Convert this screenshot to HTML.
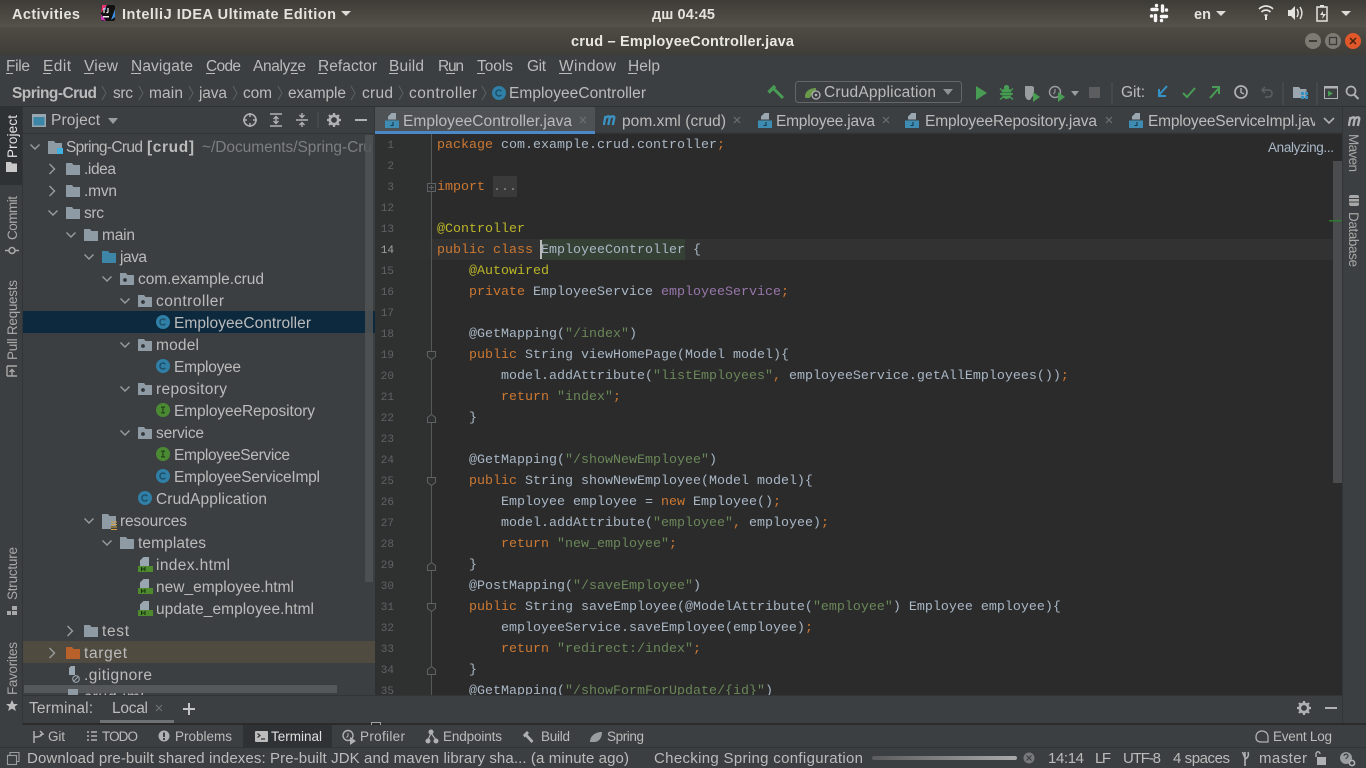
<!DOCTYPE html>
<html><head><meta charset="utf-8"><title>crud – EmployeeController.java</title>
<style>
html,body{margin:0;padding:0;background:#3c3f41;overflow:hidden;width:1366px;height:768px}
svg{display:block;font-family:"Liberation Sans",sans-serif}
.u{font-size:15.5px;fill:#bbbbbb}
.t{font-size:15px;fill:#bbbbbb}
.b{font-size:13.5px;fill:#bbbbbb}
.m{font-family:"Liberation Mono",monospace;font-size:13.333px;fill:#a9b7c6}
.n{font-family:"Liberation Mono",monospace;font-size:11px;fill:#606366;text-anchor:end}
.k{fill:#cc7832}.s{fill:#6a8759}.a{fill:#bbb529}.p{fill:#9876aa}
.c{stroke:#9a9d9f;stroke-width:1.4;fill:none}
.l{stroke:#afb1b3;stroke-width:1.5;fill:none}
</style></head><body>
<svg width="1366" height="768" viewBox="0 0 1366 768" xmlns="http://www.w3.org/2000/svg">
<defs>
<linearGradient id="g1" x1="0" y1="0" x2="0" y2="1"><stop offset="0" stop-color="#3e3c38"/><stop offset="1" stop-color="#55524a"/></linearGradient>
<linearGradient id="g2" x1="0" y1="0" x2="0" y2="1"><stop offset="0" stop-color="#4f4c45"/><stop offset="1" stop-color="#3f3d39"/></linearGradient>
<linearGradient id="g3" x1="0" y1="0" x2="1" y2="0"><stop offset="0" stop-color="#5a5c5e"/><stop offset="1" stop-color="#a8aaab"/></linearGradient>
<symbol id="d" width="14" height="12" viewBox="0 0 14 12"><path d="M0 0h6l1.500 2H14v10H0z" fill="#8e9ba5"/></symbol>
<symbol id="pk" width="14" height="12" viewBox="0 0 14 12"><path d="M0 0h6l1.500 2H14v10H0z" fill="#8e9ba5"/><circle cx="5" cy="7" r="1.900" fill="#34373a"/></symbol>
<symbol id="cl" width="14" height="14" viewBox="0 0 14 14"><circle cx="7" cy="7" r="7" fill="#2f7fa6"/><path d="M9.300 5.200A3 3 0 1 0 9.300 8.800" stroke="#1d4a62" stroke-width="1.300" fill="none"/></symbol>
<symbol id="in" width="14" height="14" viewBox="0 0 14 14"><circle cx="7" cy="7" r="7" fill="#4b8a33"/><path d="M5 4.200h4M5 9.800h4M7 4.200v5.600" stroke="#23481a" stroke-width="1.300" fill="none"/></symbol>
<symbol id="jf" width="14" height="15" viewBox="0 0 14 15"><path d="M3 3.500L6.500 0H11v6.500H3z" fill="#9aa7b0"/><rect y="7.500" width="14" height="7.500" fill="#3e8cb1"/><path d="M8 9v3.500H5.500" stroke="#16384a" stroke-width="1.100" fill="none"/></symbol>
<symbol id="hf" width="15" height="15" viewBox="0 0 15 15"><path d="M2 3.500L5.500 0H11v9H2z" fill="#9aa7b0"/><rect y="9" width="15" height="6" fill="#4e8a2e"/><path d="M3.500 10v4M7 10v4M3.500 12H7" stroke="#183010" stroke-width="1" fill="none"/></symbol>
<symbol id="cr" width="8" height="8" viewBox="0 0 8 8"><path d="M1 1l6 6M7 1L1 7" stroke="#6f7274" stroke-width="1.100" fill="none"/></symbol>
<symbol id="gr" width="14" height="14" viewBox="0 0 14 14"><circle cx="7" cy="7" r="4.200" fill="none" stroke="#afb1b3" stroke-width="2.600"/><path d="M7 0v2.500M7 11.500V14M0 7h2.500M11.500 7H14M2 2l1.800 1.800M10.200 10.200L12 12M12 2l-1.800 1.800M3.800 10.200L2 12" stroke="#afb1b3" stroke-width="2.200"/></symbol>
<symbol id="ml" width="15" height="11" viewBox="0 0 15 11"><path d="M2.500 1L.8 10M2.500 3c1.500-2 4.500-2.500 4.200 0L5.300 10M6.700 3c1.500-2 5-2.500 4.600 0L9.800 10" stroke="currentColor" stroke-width="2.300" fill="none"/></symbol>
</defs>

<rect width="1366" height="768" fill="#3c3f41"/>
<!-- gnome top bar -->
<rect width="1366" height="27" fill="url(#g1)"/>
<text x="12" y="19" font-size="14.500" font-weight="bold" fill="#e4e3de" textLength="68">Activities</text>
<rect x="101" y="5" width="14" height="16" rx="2" fill="#111"/><path d="M101 7l5-2v5zM115 9v8l-4 3z" fill="#3b8fe0"/><path d="M102 5h5l-6 8z" fill="#e8356b"/><path d="M101 14v6l5 1z" fill="#c93bb0"/><rect x="103" y="16" width="6" height="1.500" fill="#eee"/><path d="M104 8v5M108 8v4l-1.500 1" stroke="#eee" stroke-width="1.200" fill="none"/>
<text x="122" y="19" font-size="14.500" font-weight="bold" fill="#e4e3de" textLength="214">IntelliJ IDEA Ultimate Edition</text>
<path d="M341 11h10l-5 5z" fill="#dcdbd6"/>
<text x="652" y="19" font-size="14.500" font-weight="bold" fill="#e4e3de" textLength="63">дш 04:45</text>
<g stroke="#f6f6f6" stroke-width="3.400" stroke-linecap="round" fill="none"><path d="M1152 9.500h5M1156.500 5.500v.1M1162.500 6v5M1166.500 10v.1M1161.500 16.500h5M1161.500 20.500v.1M1155.500 15.500v5M1151.500 16v.1"/></g>
<text x="1194" y="19" font-size="14.500" font-weight="bold" fill="#e4e3de" textLength="17">en</text>
<path d="M1216 11h10l-5 5z" fill="#dcdbd6"/>
<path d="M1259 9c4-4 10-4 14 0M1261.500 12c2.500-2.500 6.500-2.500 9 0" stroke="#e4e3de" stroke-width="1.700" fill="none"/><path d="M1264 15c1-1 3-1 4 0l-1 1v4h-2v-4z" fill="#e4e3de"/>
<path d="M1288 10h3l4-4v14l-4-4h-3z" fill="#e4e3de"/><path d="M1297 9c1.500 2.500 1.500 5.500 0 8M1300 7c2.500 4 2.500 8 0 12" stroke="#e4e3de" stroke-width="1.400" fill="none"/>
<rect x="1317" y="7" width="10" height="14" fill="none" stroke="#e4e3de" stroke-width="1.500"/><rect x="1320" y="5" width="4" height="2" fill="#e4e3de"/><path d="M1323 11l-3 4h3l-1 4 4-5h-3z" fill="#e4e3de"/>
<path d="M1341 11h10l-5 5z" fill="#dcdbd6"/>

<!-- title bar -->
<rect y="27" width="1366" height="28" fill="url(#g2)"/>
<text x="571" y="46" font-size="14.500" font-weight="bold" fill="#e8e7e2" textLength="223">crud – EmployeeController.java</text>
<circle cx="1313" cy="41" r="8" fill="#7c7a73"/><rect x="1309" y="40" width="8" height="2" fill="#3c3b37"/>
<circle cx="1333" cy="41" r="8" fill="#7c7a73"/><rect x="1329.500" y="37.500" width="7" height="7" fill="none" stroke="#3c3b37" stroke-width="1.300"/>
<circle cx="1353" cy="41" r="8" fill="#e2572a"/><path d="M1350 38l6 6M1356 38l-6 6" stroke="#43220f" stroke-width="1.500"/>

<!-- menu -->
<g class="u">
<text x="6" y="71" textLength="24">File</text><text x="43" y="71" textLength="28">Edit</text><text x="84" y="71" textLength="34">View</text><text x="131" y="71" textLength="62">Navigate</text><text x="206" y="71" textLength="35">Code</text><text x="253" y="71" textLength="53">Analyze</text><text x="318" y="71" textLength="59">Refactor</text><text x="389" y="71" textLength="35">Build</text><text x="438" y="71" textLength="26">Run</text><text x="477" y="71" textLength="36">Tools</text><text x="527" y="71" textLength="19">Git</text><text x="559" y="71" textLength="57">Window</text><text x="628" y="71" textLength="32">Help</text>
</g>
<path d="M6 73.500h7M43 73.500h8M84 73.500h10M131 73.500h10M206 73.500h9M291 73.500h7M318 73.500h9M389 73.500h9M446 73.500h9M477 73.500h8M559 73.500h13M628 73.500h9" stroke="#bbb" stroke-width="1"/>

<!-- breadcrumb -->
<g class="u">
<text x="12" y="98" font-weight="bold" textLength="85">Spring-Crud</text><text x="113" y="98" textLength="20">src</text><text x="149" y="98" textLength="34">main</text><text x="199" y="98" textLength="28">java</text><text x="243" y="98" textLength="29">com</text><text x="288" y="98" textLength="58">example</text><text x="362" y="98" textLength="31">crud</text><text x="409" y="98" textLength="68">controller</text><text x="509" y="98" textLength="137">EmployeeController</text>
</g>
<g stroke="#5e6163" stroke-width="1" fill="none"><path d="M102 86l4 7-4 7M139 86l4 7-4 7M189 86l4 7-4 7M233 86l4 7-4 7M278 86l4 7-4 7M351 86l4 7-4 7M399 86l4 7-4 7M482 86l4 7-4 7"/></g>
<use href="#cl" x="492" y="86"/>
<!-- run toolbar -->
<path d="M768.500 92.500l6.500-6.500" stroke="#499c54" stroke-width="3.400" fill="none"/><path d="M774 89l9 9" stroke="#499c54" stroke-width="3" fill="none"/>
<rect x="795.500" y="81.500" width="166" height="21" rx="3" fill="#3c3f41" stroke="#646769"/>
<path d="M805 97c0-6 5-9 11-9 0 3-1 4-2 5-3 0-3 5-5 5-2 0-4 0-4-1z" fill="#6a9a4a"/><circle cx="816" cy="95" r="4" fill="#3c3f41" stroke="#afb1b3" stroke-width="1.300"/><circle cx="816" cy="95" r="1.300" fill="#afb1b3"/>
<text class="u" x="824" y="97" textLength="112">CrudApplication</text>
<path d="M943 89h10l-5 6z" fill="#8f9294"/>
<path d="M976 86l11 7-11 7z" fill="#499c54"/>
<ellipse cx="1006.500" cy="93.500" rx="5" ry="5.500" fill="#499c54"/><circle cx="1006.500" cy="87.500" r="2.600" fill="#499c54"/><path d="M1000 88.500l3 2.500M1013 88.500l-3 2.500M1000 94h3M1010 94h3M1000 99.500l3-2.500M1013 99.500l-3-2.500" stroke="#499c54" stroke-width="1.400"/><path d="M1002 92.500h9M1002 95.500h9" stroke="#2f6b3a" stroke-width=".8"/>
<path d="M1025 86h6c2 0 3 1 3 2v6l-4 6h-2c-2-1-3-3-3-6z" fill="#9a9d9f"/><path d="M1033 92l7 5-7 5z" fill="#499c54"/>
<circle cx="1055" cy="92" r="5.500" fill="none" stroke="#9a9d9f" stroke-width="1.400"/><path d="M1055 89v3l-1.500 2" stroke="#9a9d9f" stroke-width="1.100" fill="none"/><path d="M1058 92l7 5-7 5z" fill="#499c54"/>
<path d="M1071 91h8l-4 5z" fill="#9a9d9f"/>
<rect x="1089" y="87" width="11" height="11" fill="#5b5d5f"/>
<path d="M1112 82v23" stroke="#505355"/>
<text class="u" x="1121" y="97" textLength="24">Git:</text>
<path d="M1167 86l-8 9M1159 89v7h7" stroke="#3592c4" stroke-width="2" fill="none"/>
<path d="M1183 93l4 4 8-9" stroke="#499c54" stroke-width="2" fill="none"/>
<path d="M1210 98l9-10M1212 87h7v7" stroke="#499c54" stroke-width="2" fill="none"/>
<circle cx="1241" cy="92" r="6" fill="none" stroke="#afb1b3" stroke-width="1.700"/><path d="M1241 88v4.500l3 1.500" stroke="#afb1b3" stroke-width="1.400" fill="none"/>
<path d="M1265 87l-3 3 3 3M1262 90h7c4 0 4 7 0 7h-4" stroke="#5d6062" stroke-width="1.500" fill="none"/>
<path d="M1283 82v23" stroke="#505355"/>
<path d="M1293 87h6l1.500 2h6v9h-13.500z" fill="#9aa7b0"/><rect x="1301" y="92" width="3" height="3" fill="#3592c4"/><rect x="1305" y="92" width="3" height="3" fill="#3592c4"/><rect x="1301" y="96" width="3" height="3" fill="#3592c4"/><rect x="1305" y="96" width="3" height="3" fill="#3592c4"/>
<path d="M1317 82v23" stroke="#505355"/>
<rect x="1324.500" y="86.500" width="13" height="12" fill="none" stroke="#afb1b3"/><rect x="1324" y="86" width="14" height="2.500" fill="#afb1b3"/><path d="M1328 90.500l5 3-5 3z" fill="#499c54"/>
<circle cx="1351" cy="91" r="4.500" fill="none" stroke="#afb1b3" stroke-width="1.700"/><path d="M1354 94.500l4.500 4.500" stroke="#afb1b3" stroke-width="2"/>
<path d="M0 106.500h1366" stroke="#2f3133"/>

<!-- left strip -->
<rect y="107" width="23" height="618" fill="#3c3f41"/>
<rect y="107" width="23" height="78" fill="#2f3234"/>
<path d="M22.500 107v618" stroke="#323537"/>
<g class="b">
<text transform="translate(17,158) rotate(-90)" textLength="43" style="fill:#e2e2e2">Project</text>
<text transform="translate(17,240) rotate(-90)" textLength="44" style="fill:#a8a8a8">Commit</text>
<text transform="translate(17,360) rotate(-90)" textLength="80" style="fill:#a8a8a8">Pull Requests</text>
<text transform="translate(17,600) rotate(-90)" textLength="53" style="fill:#a8a8a8">Structure</text>
<text transform="translate(17,695) rotate(-90)" textLength="53" style="fill:#a8a8a8">Favorites</text>
</g>
<path d="M6 162h5l1 1.500h5V172H6z" fill="#c9c9c9"/>
<circle cx="12" cy="250.500" r="3" fill="none" stroke="#a8a8a8" stroke-width="1.600"/><path d="M5 250.500h3.500M15.500 250.500H19" stroke="#a8a8a8" stroke-width="1.600"/>
<path d="M7 366h10M7 376h10M7 366v10M12 376v-6M9.500 372l2.500-2.500 2.500 2.500" stroke="#a8a8a8" stroke-width="1.400" fill="none"/>
<rect x="7" y="611" width="4" height="4" fill="#a8a8a8"/><rect x="12" y="606" width="5" height="4" fill="#a8a8a8"/><rect x="12" y="611" width="5" height="4" fill="#a8a8a8"/>

<!-- project panel header -->
<rect x="23" y="107" width="352" height="27" fill="#3c3f41"/>
<rect x="32" y="114" width="14" height="13" fill="#9aa7b0"/><rect x="33.500" y="117" width="11" height="8.500" fill="#3c87a8"/>
<text class="u" x="51" y="125" textLength="49">Project</text>
<path d="M108 118h10l-5 6z" fill="#9a9d9f"/>
<circle cx="250" cy="120" r="6" fill="none" stroke="#afb1b3" stroke-width="1.600"/><path d="M250 113v4M250 123v4M243 120h4M253 120h4" stroke="#afb1b3" stroke-width="1.500"/>
<path d="M270 114h12M270 126h12M276 117v6M273.500 119l2.500-2.500 2.500 2.500M273.500 121l2.500 2.500 2.500-2.500" stroke="#afb1b3" stroke-width="1.400" fill="none"/>
<path d="M296 120h12M302 113v4M302 123v4M299.500 115l2.500 2.500 2.500-2.500M299.500 125l2.500-2.500 2.500 2.500" stroke="#afb1b3" stroke-width="1.400" fill="none"/>
<path d="M318 112v16" stroke="#505355"/>
<use href="#gr" x="327" y="113"/>
<rect x="355" y="119" width="12" height="2" fill="#afb1b3"/>
<path d="M23 133.500h352" stroke="#323537"/>

<!-- project tree -->
<rect x="23" y="311" width="352" height="22" fill="#0d293e"/>
<rect x="23" y="641" width="352" height="22" fill="#4f4b41"/>
<g class="c">
<path d="M30.500 144.500l4.500 4.500 4.500-4.500M49.500 164l5 5-5 5M49.500 186l5 5-5 5"/><path d="M48.500 210.500l4.500 4.500 4.500-4.500M66.500 232.500l4.500 4.500 4.500-4.500M84.500 254.500l4.500 4.500 4.500-4.500M102.500 276.500l4.500 4.500 4.500-4.500M120.500 298.500l4.500 4.500 4.500-4.500M120.500 342.500l4.500 4.500 4.500-4.500M120.500 386.500l4.500 4.500 4.500-4.500M120.500 430.500l4.500 4.500 4.500-4.500M84.500 518.500l4.500 4.500 4.500-4.500M102.500 540.500l4.500 4.500 4.500-4.500"/><path d="M67.500 626l5 5-5 5M49.500 648l5 5-5 5"/>
</g>
<path d="M48 141h6l1.500 2H62v11H48z" fill="#8e9ba5"/><rect x="57" y="148" width="6" height="6" fill="#3fb0e0"/>
<use href="#d" x="66" y="163"/><use href="#d" x="66" y="185"/><use href="#d" x="66" y="207"/><use href="#d" x="84" y="229"/>
<path d="M102 251h6l1.500 2H116v10h-14z" fill="#3e86a8"/>
<use href="#pk" x="120" y="273"/><use href="#pk" x="138" y="295"/><use href="#pk" x="138" y="339"/><use href="#pk" x="138" y="383"/><use href="#pk" x="138" y="427"/>
<use href="#cl" x="156" y="315"/><use href="#cl" x="156" y="359"/><use href="#in" x="156" y="403"/><use href="#in" x="156" y="447"/><use href="#cl" x="156" y="469"/><use href="#cl" x="138" y="491"/>
<path d="M102 514h6l1.500 2H116v10h-5v3h-9z" fill="#8e9ba5"/><path d="M111 522h6M111 524.500h6M111 527h6M111 529.500h6" stroke="#d9a343" stroke-width="1"/>
<use href="#d" x="120" y="537"/>
<use href="#hf" x="138" y="557"/><use href="#hf" x="138" y="579"/><use href="#hf" x="138" y="601"/>
<use href="#d" x="84" y="625"/>
<path d="M66 647h6l1.500 2H80v10H66z" fill="#b9612b"/>
<path d="M69 668l2-2h4v9h-6z" fill="#9aa7b0"/><circle cx="76" cy="679" r="3.300" fill="#3c3f41" stroke="#9aa7b0" stroke-width="1.100"/><path d="M74 681l4-4" stroke="#9aa7b0"/>
<g class="u">
<text x="66" y="152" textLength="77">Spring-Crud</text><text x="147" y="152" font-weight="bold" textLength="47">[crud]</text>
<text x="202" y="152" textLength="170" style="fill:#7c7f81">~/Documents/Spring-Cru</text>
<text x="84" y="174" textLength="32">.idea</text><text x="84" y="196" textLength="33">.mvn</text><text x="84" y="218" textLength="20">src</text><text x="102" y="240" textLength="33">main</text><text x="120" y="262" textLength="27">java</text><text x="138" y="284" textLength="126">com.example.crud</text><text x="156" y="306" textLength="68">controller</text><text x="174" y="328" textLength="137">EmployeeController</text><text x="156" y="350" textLength="43">model</text><text x="174" y="372" textLength="67">Employee</text><text x="156" y="394" textLength="71">repository</text><text x="174" y="416" textLength="141">EmployeeRepository</text><text x="156" y="438" textLength="48">service</text><text x="174" y="460" textLength="116">EmployeeService</text><text x="174" y="482" textLength="146">EmployeeServiceImpl</text><text x="156" y="504" textLength="111">CrudApplication</text><text x="120" y="526" textLength="67">resources</text><text x="138" y="548" textLength="68">templates</text><text x="156" y="570" textLength="74">index.html</text><text x="156" y="592" textLength="138">new_employee.html</text><text x="156" y="614" textLength="158">update_employee.html</text><text x="102" y="636" textLength="27">test</text><text x="84" y="658" textLength="43">target</text><text x="84" y="680" textLength="68">.gitignore</text><text x="84" y="702" textLength="60">crud.iml</text>
</g>
<rect x="365" y="135" width="8" height="447" fill="#505355" opacity=".85"/>
<rect x="24" y="685" width="313" height="8" fill="#55585a"/>
<rect x="68" y="689" width="10" height="8" fill="#8e9ba5"/>

<!-- tab bar -->
<rect x="375" y="107" width="967" height="27" fill="#3c3f41"/>
<rect x="375" y="107" width="220" height="24" fill="#4e5254"/>
<rect x="375" y="131" width="220" height="3" fill="#4a88c7"/>
<rect x="595" y="132.500" width="747" height="1.500" fill="#323537"/>
<path d="M374.500 107v28" stroke="#323537"/>
<use href="#jf" x="385" y="113"/><text class="u" x="403" y="126" textLength="169">EmployeeController.java</text><use href="#cr" x="579" y="116"/>
<use href="#ml" x="603" y="115" style="color:#3b93c4"/><text class="u" x="622" y="126" textLength="104">pom.xml (crud)</text><use href="#cr" x="733" y="116"/>
<use href="#jf" x="758" y="113"/><text class="u" x="776" y="126" textLength="99">Employee.java</text><use href="#cr" x="882" y="116"/>
<use href="#jf" x="905" y="113"/><text class="u" x="925" y="126" textLength="172">EmployeeRepository.java</text><use href="#cr" x="1105" y="116"/>
<use href="#jf" x="1129" y="113"/>
<svg x="1148" y="108" width="167" height="24"><text class="u" x="0" y="18" textLength="178">EmployeeServiceImpl.java</text></svg>
<path d="M1324 118l5 5 5-5" stroke="#afb1b3" stroke-width="1.600" fill="none"/>

<!-- editor -->
<rect x="375" y="134" width="967" height="561" fill="#2b2b2b"/>
<rect x="375" y="134" width="56" height="561" fill="#2f3030"/>
<path d="M431.500 134v561" stroke="#555759"/>
<rect x="432" y="239" width="901" height="21" fill="#323232"/>
<rect x="375" y="239" width="56" height="21" fill="#303131"/>
<rect x="493" y="176" width="24" height="21" fill="#3a3a3a"/>
<rect x="541" y="239" width="144" height="21" fill="#344134"/>
<rect x="540" y="240" width="2" height="19" fill="#bbbbbb"/>
<g class="n" transform="translate(0,-1)">
<text x="394" y="149">1</text><text x="394" y="170">2</text><text x="394" y="191">3</text><text x="394" y="212">12</text><text x="394" y="233">13</text><text x="394" y="254" style="fill:#a4a3a3">14</text><text x="394" y="275">15</text><text x="394" y="296">16</text><text x="394" y="317">17</text><text x="394" y="338">18</text><text x="394" y="359">19</text><text x="394" y="380">20</text><text x="394" y="401">21</text><text x="394" y="422">22</text><text x="394" y="443">23</text><text x="394" y="464">24</text><text x="394" y="485">25</text><text x="394" y="506">26</text><text x="394" y="527">27</text><text x="394" y="548">28</text><text x="394" y="569">29</text><text x="394" y="590">30</text><text x="394" y="611">31</text><text x="394" y="632">32</text><text x="394" y="653">33</text><text x="394" y="674">34</text><text x="394" y="695">35</text>
</g>
<g fill="#2f3030" stroke="#5f6264">
<rect x="427.500" y="183.500" width="8" height="8"/>
<path d="M427.500 351.500h8v5l-4 3-4-3zM427.500 477.500h8v5l-4 3-4-3zM427.500 603.500h8v5l-4 3-4-3zM427.500 422.500h8v-5l-4-3-4 3zM427.500 570.500h8v-5l-4-3-4 3zM427.500 674.500h8v-5l-4-3-4 3z"/>
</g>
<path d="M429 187.500h5M431.500 185v5" stroke="#5f6264"/>
<g class="m" transform="translate(0,-1)">
<text x="437" y="149"><tspan class="k">package</tspan> com.example.crud.controller<tspan class="k">;</tspan></text>
<text x="437" y="191"><tspan class="k">import</tspan></text><text x="493" y="191" style="fill:#8a8a8a">...</text>
<text x="437" y="233"><tspan class="a">@Controller</tspan></text>
<text x="437" y="254"><tspan class="k">public class</tspan> EmployeeController {</text>
<text x="469" y="275"><tspan class="a">@Autowired</tspan></text>
<text x="469" y="296"><tspan class="k">private</tspan> EmployeeService <tspan class="p">employeeService</tspan><tspan class="k">;</tspan></text>
<text x="469" y="338">@GetMapping(<tspan class="s">"/index"</tspan>)</text>
<text x="469" y="359"><tspan class="k">public</tspan> String viewHomePage(Model model){</text>
<text x="501" y="380">model.addAttribute(<tspan class="s">"listEmployees"</tspan><tspan class="k">,</tspan> employeeService.getAllEmployees())<tspan class="k">;</tspan></text>
<text x="501" y="401"><tspan class="k">return</tspan> <tspan class="s">"index"</tspan><tspan class="k">;</tspan></text>
<text x="469" y="422">}</text>
<text x="469" y="464">@GetMapping(<tspan class="s">"/showNewEmployee"</tspan>)</text>
<text x="469" y="485"><tspan class="k">public</tspan> String showNewEmployee(Model model){</text>
<text x="501" y="506">Employee employee = <tspan class="k">new</tspan> Employee()<tspan class="k">;</tspan></text>
<text x="501" y="527">model.addAttribute(<tspan class="s">"employee"</tspan><tspan class="k">,</tspan> employee)<tspan class="k">;</tspan></text>
<text x="501" y="548"><tspan class="k">return</tspan> <tspan class="s">"new_employee"</tspan><tspan class="k">;</tspan></text>
<text x="469" y="569">}</text>
<text x="469" y="590">@PostMapping(<tspan class="s">"/saveEmployee"</tspan>)</text>
<text x="469" y="611"><tspan class="k">public</tspan> String saveEmployee(@ModelAttribute(<tspan class="s">"employee"</tspan>) Employee employee){</text>
<text x="501" y="632">employeeService.saveEmployee(employee)<tspan class="k">;</tspan></text>
<text x="501" y="653"><tspan class="k">return</tspan> <tspan class="s">"redirect:/index"</tspan><tspan class="k">;</tspan></text>
<text x="469" y="674">}</text>
<text x="469" y="695">@GetMapping(<tspan class="s">"/showFormForUpdate/{id}"</tspan>)</text>
</g>
<text x="1268" y="152" font-size="13.500" fill="#a9b7c6" textLength="66">Analyzing...</text>
<rect x="1333" y="161" width="9" height="322" fill="#4a4c4e"/>
<rect x="1329" y="220" width="13" height="1.500" fill="#2f7a32"/>

<!-- right strip -->
<rect x="1342" y="107" width="24" height="618" fill="#3c3f41"/>
<path d="M1342.500 107v618" stroke="#323537"/>
<use href="#ml" x="1348" y="116" style="color:#afb1b3"/>
<text class="b" transform="translate(1349,134) rotate(90)" textLength="38" style="fill:#a8a8a8">Maven</text>
<rect x="1349" y="195" width="10" height="11" rx="2" fill="#a8a8a8"/><path d="M1349 198.500h10M1349 202h10" stroke="#3c3f41"/>
<text class="b" transform="translate(1349,212) rotate(90)" textLength="55" style="fill:#a8a8a8">Database</text>

<!-- terminal panel -->
<rect x="23" y="695" width="1319" height="29" fill="#3c3f41"/>
<path d="M23 695.500h1319" stroke="#323537"/>
<path d="M12 700l1.800 4h4.200l-3.300 2.800 1.200 4.200-3.900-2.400-3.900 2.400 1.200-4.200-3.300-2.800h4.200z" fill="#bdbdbd"/>
<text class="u" x="29" y="713" textLength="64">Terminal:</text>
<text class="u" x="112" y="713" textLength="36">Local</text>
<use href="#cr" x="155" y="704"/>
<path d="M189 703v12M183 709h12" stroke="#c4c4c4" stroke-width="2"/>
<rect x="100" y="720" width="74" height="3" fill="#6f7274"/>
<use href="#gr" x="1297" y="701"/><rect x="1325" y="707" width="12" height="2" fill="#afb1b3"/>
<rect x="23" y="723" width="1343" height="2" fill="#2b2b2b"/>
<rect x="371.500" y="722.500" width="9" height="4" fill="none" stroke="#bbb" stroke-width=".8"/>

<!-- tool window bar -->
<rect y="725" width="1366" height="23" fill="#3c3f41"/>
<path d="M0 747.500h1366" stroke="#323537"/>
<rect x="243" y="725" width="89" height="23" fill="#2f3234"/>
<path d="M34 731v12M34 737c3 0 7 0 8-3M40 731l3 3-3 1" class="l"/>
<text class="b" x="48" y="741" textLength="17">Git</text>
<path d="M87 732h2M87 736h2M87 740h2M91 732h6M91 736h6M91 740h6" class="l"/>
<text class="b" x="102" y="741" textLength="36">TODO</text>
<circle cx="164" cy="736" r="5.500" fill="#afb1b3"/><rect x="163" y="732.500" width="2" height="4.500" fill="#3c3f41"/><rect x="163" y="738" width="2" height="2" fill="#3c3f41"/>
<text class="b" x="175" y="741" textLength="57">Problems</text>
<rect x="255" y="731" width="13" height="11" rx="1" fill="#bdbdbd"/><path d="M257.500 733.500l2.500 2-2.500 2M261 739h4" stroke="#2f3234" stroke-width="1.200" fill="none"/>
<text class="b" x="271" y="741" textLength="51" style="fill:#e0e0e0">Terminal</text>
<circle cx="348" cy="735.500" r="5" fill="none" stroke="#afb1b3" stroke-width="1.400"/><path d="M348 733v3l-1.500 1.500" stroke="#afb1b3" fill="none"/><path d="M350 737l6 4-6 4z" fill="#afb1b3"/>
<text class="b" x="360" y="741" textLength="45">Profiler</text>
<circle cx="431" cy="732" r="2.500" fill="#afb1b3"/><circle cx="428" cy="741" r="2.500" fill="#afb1b3"/><circle cx="436" cy="741" r="2.500" fill="#afb1b3"/><path d="M431 733l-3 7M431 733l5 7" stroke="#afb1b3" stroke-width="1.200"/>
<text class="b" x="443" y="741" textLength="59">Endpoints</text>
<path d="M523 735l4-4 2 2-1.500 1.500 6 6.500-2 2-6-6.500-1 1z" fill="#afb1b3"/>
<text class="b" x="541" y="741" textLength="29">Build</text>
<path d="M590 742c0-6 5-10 12-10 0 6-3 10-8 10-1.500 0-3 0-4 0z" fill="#9a9d9f"/>
<text class="b" x="607" y="741" textLength="37">Spring</text>
<path d="M1262 742c-5 0-6-2-6-5 0-4 3-6 6-6s6 2 6 6v5z" fill="none" stroke="#afb1b3" stroke-width="1.300"/>
<text class="b" x="1273" y="741" textLength="59">Event Log</text>

<!-- status bar -->
<rect y="748" width="1366" height="20" fill="#3c3f41"/>
<rect x="7.500" y="755.500" width="9" height="9" fill="none" stroke="#9a9d9f" stroke-width="1.100"/><path d="M10 755v-2.500h9v9h-2.500" stroke="#9a9d9f" stroke-width="1.100" fill="none"/>
<g class="t">
<text x="27" y="763" textLength="602">Download pre-built shared indexes: Pre-built JDK and maven library sha... (a minute ago)</text>
<text x="654" y="763" textLength="209">Checking Spring configuration</text>
<text x="1048" y="763" textLength="36">14:14</text>
<text x="1095" y="763" textLength="16">LF</text>
<text x="1123" y="763" textLength="38">UTF-8</text>
<text x="1173" y="763" textLength="57">4 spaces</text>
<text x="1259" y="763" textLength="48">master</text>
</g>
<rect x="872" y="756" width="145" height="4" rx="2" fill="url(#g3)"/>
<circle cx="1029" cy="758" r="5.500" fill="#77797b"/><path d="M1026.500 755.500l5 5M1031.500 755.500l-5 5" stroke="#3c3f41" stroke-width="1.200"/>
<path d="M1245 752v14M1248 752c1 3 0 6-3 7M1242.500 752l2.500 6" stroke="#afb1b3" stroke-width="1.600" fill="none"/>
<rect x="1317" y="757" width="9" height="8" fill="#afb1b3"/><path d="M1316 757v-3c0-3 4-3 4 0" stroke="#afb1b3" stroke-width="1.400" fill="none"/>
<circle cx="1346" cy="758" r="6" fill="#9a9d9f"/><path d="M1344 756c0-2.500 4-2.500 4 0 0 1.500-2 1.500-2 3" stroke="#3c3f41" stroke-width="1.200" fill="none"/><circle cx="1352" cy="763" r="2.600" fill="#3c3f41" stroke="#afb1b3" stroke-width="1.600"/>
</svg>
</body></html>
